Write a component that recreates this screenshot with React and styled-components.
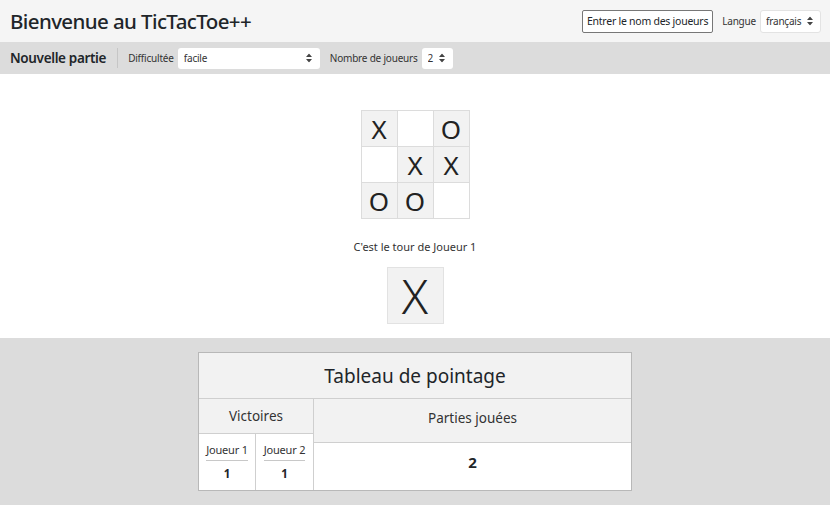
import React, { useState } from 'react'
import styled, { createGlobalStyle } from 'styled-components'

const GlobalStyle = createGlobalStyle`
  html, body {
    margin: 0;
    padding: 0;
    background: #fff;
    font-family: "Noto Sans", "Open Sans", sans-serif;
    color: #212529;
  }
`

const Header = styled.header`
  display: flex;
  align-items: center;
  justify-content: space-between;
  height: 42px;
  padding: 0 9px 0 10px;
  background: #f5f5f5;
`

const Title = styled.h1`
  margin: 0;
  font-size: 20.5px;
  font-weight: 500;
  letter-spacing: -0.6px;
`

const HeaderRight = styled.div`
  display: flex;
  align-items: center;
  gap: 9px;
`

const Button = styled.button`
  height: 23px;
  padding: 0 4px;
  font-family: inherit;
  font-size: 10.5px;
  letter-spacing: -0.25px;
  color: #212529;
  background: #fff;
  border: 1px solid #777;
  border-radius: 2px;
`

const Label = styled.label`
  display: flex;
  align-items: center;
  gap: 4px;
  font-size: ${p => p.size || 10}px;
  letter-spacing: -0.2px;
  color: #333;
`

const SelectBox = styled.div`
  position: relative;
  display: flex;
  align-items: center;
  width: ${p => p.width}px;
  height: ${p => p.height || 21}px;
  background: #fff;
  border: 1px solid ${p => p.bordered ? '#e3e3e3' : 'transparent'};
  border-radius: 3px;
  box-sizing: border-box;
`

const NativeSelect = styled.select`
  appearance: none;
  width: 100%;
  height: 100%;
  padding: 0 14px 0 5px;
  border: none;
  background: transparent;
  font-family: inherit;
  font-size: 10px;
  letter-spacing: -0.2px;
  color: #333;
  outline: none;
`

const Arrow = styled.svg`
  position: absolute;
  right: 7px;
  top: 50%;
  transform: translateY(-50%);
  pointer-events: none;
`

const Toolbar = styled.nav`
  display: flex;
  align-items: center;
  height: 32px;
  padding: 0 10px;
  background: #dcdcdc;
  gap: 10px;
`

const ToolTitle = styled.div`
  font-size: 13.5px;
  font-weight: 600;
  letter-spacing: -0.35px;
  padding-right: 11px;
  border-right: 1px solid #c6c6c6;
  line-height: 20px;
`

const GameArea = styled.main`
  display: flex;
  flex-direction: column;
  align-items: center;
  padding: 36px 0 14px;
`

const Board = styled.div`
  display: grid;
  grid-template-columns: repeat(3, 36px);
  grid-template-rows: repeat(3, 36px);
  border: 1px solid #dcdcdc;
  border-right: none;
  border-bottom: none;
`

const Cell = styled.div`
  display: flex;
  align-items: center;
  justify-content: center;
  font-size: 26px;
  color: #222;
  background: ${p => p.filled ? '#f2f2f2' : '#fff'};
  border-right: 1px solid #dcdcdc;
  border-bottom: 1px solid #dcdcdc;
`

const TurnText = styled.p`
  margin: 20px 0 13px;
  font-size: 11px;
  color: #333;
`

const TurnBox = styled.div`
  display: flex;
  align-items: center;
  justify-content: center;
  width: 55px;
  height: 55px;
  font-size: 48px;
  font-weight: 300;
  color: #222;
  background: #f2f2f2;
  border: 1px solid #e2e2e2;
`

const ScoreArea = styled.section`
  display: flex;
  justify-content: center;
  padding: 14px 0 14px;
  background: #dcdcdc;
`

const ScoreTable = styled.div`
  width: 432px;
  background: #fff;
  border: 1px solid #b8b8b8;
`

const ScoreTitle = styled.div`
  display: flex;
  align-items: center;
  justify-content: center;
  height: 45px;
  font-size: 19px;
  background: #f2f2f2;
  border-bottom: 1px solid #cfcfcf;
`

const ScoreBody = styled.div`
  display: grid;
  grid-template-columns: 115px 1fr;
`

const Column = styled.div`
  display: flex;
  flex-direction: column;
  border-right: ${p => p.divider ? '1px solid #cfcfcf' : 'none'};
`

const HeadCell = styled.div`
  display: flex;
  align-items: center;
  justify-content: center;
  height: ${p => p.height}px;
  padding-bottom: ${p => p.lift || 0}px;
  box-sizing: border-box;
  font-size: 13.5px;
  color: #333;
  background: #f2f2f2;
  border-bottom: 1px solid #cfcfcf;
`

const PlayerRow = styled.div`
  display: grid;
  grid-template-columns: 1fr 1fr;
  flex: 1;
`

const PlayerCell = styled.div`
  display: flex;
  flex-direction: column;
  align-items: center;
  padding: 8px 0 0;
  height: 48px;
  border-right: ${p => p.divider ? '1px solid #cfcfcf' : 'none'};
`

const PlayerName = styled.div`
  font-size: 11px;
  letter-spacing: -0.2px;
  color: #333;
  padding: 0 0 3px;
  border-bottom: 1px solid #c8c8c8;
`

const PlayerScore = styled.div`
  margin-top: 5px;
  font-size: 11.5px;
  font-weight: 700;
`

const GamesValue = styled.div`
  display: flex;
  justify-content: center;
  padding-top: 9px;
  height: 38px;
  font-size: 15px;
  font-weight: 700;
`

function UpDown() {
  return (
    <Arrow width="6" height="9" viewBox="0 0 6 9">
      <path d="M3 0 L6 3.5 H0 Z M3 9 L0 5.5 H6 Z" fill="#444" />
    </Arrow>
  )
}

function Select({ width, height, value, options, bordered }) {
  return (
    <SelectBox width={width} height={height} bordered={bordered}>
      <NativeSelect defaultValue={value}>
        {options.map(o => <option key={o}>{o}</option>)}
      </NativeSelect>
      <UpDown />
    </SelectBox>
  )
}

export default function App() {
  const [board] = useState(['X', '', 'O', '', 'X', 'X', 'O', 'O', ''])

  return (
    <>
      <GlobalStyle />
      <Header>
        <Title>Bienvenue au TicTacToe++</Title>
        <HeaderRight>
          <Button>Entrer le nom des joueurs</Button>
          <Label size={10}>
            Langue
            <Select width={61} height={23} value="français" options={['français', 'english']} bordered />
          </Label>
        </HeaderRight>
      </Header>
      <Toolbar>
        <ToolTitle>Nouvelle partie</ToolTitle>
        <Label>
          Difficultée
          <Select width={142} value="facile" options={['facile', 'moyen', 'difficile']} />
        </Label>
        <Label>
          Nombre de joueurs
          <Select width={31} value="2" options={['1', '2']} />
        </Label>
      </Toolbar>
      <GameArea>
        <Board>
          {board.map((v, i) => (
            <Cell key={i} filled={v !== ''}>{v}</Cell>
          ))}
        </Board>
        <TurnText>C'est le tour de Joueur 1</TurnText>
        <TurnBox>X</TurnBox>
      </GameArea>
      <ScoreArea>
        <ScoreTable>
          <ScoreTitle>Tableau de pointage</ScoreTitle>
          <ScoreBody>
            <Column divider>
              <HeadCell height={35}>Victoires</HeadCell>
              <PlayerRow>
                <PlayerCell divider>
                  <PlayerName>Joueur 1</PlayerName>
                  <PlayerScore>1</PlayerScore>
                </PlayerCell>
                <PlayerCell>
                  <PlayerName>Joueur 2</PlayerName>
                  <PlayerScore>1</PlayerScore>
                </PlayerCell>
              </PlayerRow>
            </Column>
            <Column>
              <HeadCell height={44} lift={6}>Parties jouées</HeadCell>
              <GamesValue>2</GamesValue>
            </Column>
          </ScoreBody>
        </ScoreTable>
      </ScoreArea>
    </>
  )
}
